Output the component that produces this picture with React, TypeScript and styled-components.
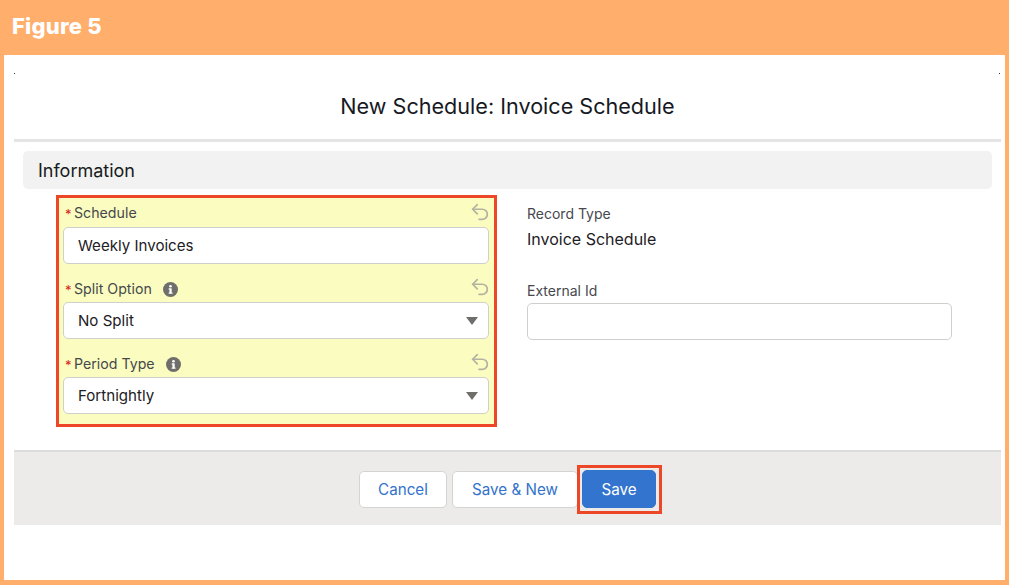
import React from "react";
import styled, { createGlobalStyle } from "styled-components";
import { Undo2 } from "lucide-react";

const Global = createGlobalStyle`
  html, body { margin: 0; padding: 0; background: #fff; }
  * { box-sizing: border-box; }
  body { font-family: Inter, "Liberation Sans", sans-serif; }
`;

const Frame = styled.div`
  width: 1009px;
  height: 585px;
  background: #ffae6b;
  display: flex;
  flex-direction: column;
  padding: 0 4px 5px 4px;
  overflow: hidden;
`;

const Banner = styled.header`
  height: 55px;
  flex: none;
  padding: 14px 0 0 8px;
  color: #fff;
  font: 800 22px/24px Inter, sans-serif;
  letter-spacing: 0.2px;
`;

const Panel = styled.main`
  flex: 1;
  background: #fff;
  padding: 0 4px 0 10px;
  display: flex;
  flex-direction: column;
`;

const Marks = styled.div`
  height: 37px;
  padding: 18px 1px 0 0;
  display: flex;
  justify-content: space-between;
  align-items: flex-start;
`;

const Mark = styled.span`
  width: 1px;
  height: 1px;
  background: #333;
`;

const Title = styled.h1`
  margin: 0;
  height: 47px;
  text-align: center;
  font-weight: 400;
  font-size: 21.6px;
  line-height: 28px;
  color: #16191f;
`;

const Rule = styled.div`
  height: 3px;
  background: #e4e4e4;
  flex: none;
`;

const Section = styled.div`
  margin: 9px 9px 0 9px;
  height: 38px;
  border-radius: 5px;
  background: #f2f2f2;
  padding-left: 15px;
  font-size: 18px;
  line-height: 40px;
  color: #181b20;
`;

const FormGrid = styled.div`
  display: flex;
  margin: 6px 0 0 42px;
  height: 232px;
`;

const Required = styled.section`
  width: 441px;
  height: 232px;
  border: 3px solid #ee4728;
  background: #fbfdc0;
  padding: 6px 5px 0 4px;
  display: flex;
  flex-direction: column;
  gap: 15px;
`;

const LabelRow = styled.div`
  height: 23px;
  flex: none;
  display: flex;
  align-items: flex-start;
  font-size: 14.2px;
  line-height: 18px;
  color: #46484d;
  position: relative;
`;

const Field = styled.div`
  height: 60px;
  flex: none;
  display: flex;
  flex-direction: column;

  & + & ${LabelRow} {
    padding-top: 1px;
  }
`;

const Star = styled.span`
  color: #d6231c;
  width: 9px;
  margin-left: 2px;
  margin-top: 1px;
  font-size: 13px;
`;

const InfoBadge = styled.svg`
  width: 15px;
  height: 15px;
  margin: 2px 0 0 11px;
  flex: none;
`;

const Revert = styled(Undo2)`
  position: absolute;
  right: -2px;
  top: -3px;
  color: #b3b3a3;
`;

const Control = styled.div<{ $width?: number }>`
  width: ${(p) => p.$width ?? 426}px;
  height: 37px;
  flex: none;
  border: 1.5px solid #cfcfcb;
  border-radius: 5px;
  background: #fff;
  display: flex;
  align-items: center;
  justify-content: space-between;
  padding: 0 10px 0 14px;
  font-size: 15.1px;
  color: #1d2025;
`;

const Caret = styled.span`
  width: 0;
  height: 0;
  border-left: 6px solid transparent;
  border-right: 6px solid transparent;
  border-top: 8px solid #706e6b;
`;

const Side = styled.aside`
  margin-left: 30px;
  display: flex;
  flex-direction: column;
  padding-top: 10px;
`;

const SideLabel = styled.div`
  font-size: 14px;
  line-height: 17px;
  color: #46484d;
`;

const SideValue = styled.div`
  margin-top: 8px;
  font-size: 16px;
  line-height: 18px;
  color: #1d2025;
  height: 52px;
`;

const SideInputLabel = styled(SideLabel)`
  margin-bottom: 4px;
`;

const Footer = styled.footer`
  margin-top: 23px;
  height: 75px;
  background: #ecebea;
  border-top: 2px solid #dcdcdc;
  display: flex;
  justify-content: center;
  align-items: flex-start;
  padding-top: 19px;
`;

const Button = styled.button<{ $width: number; $gap: number }>`
  width: ${(p) => p.$width}px;
  height: 37px;
  margin-left: ${(p) => p.$gap}px;
  border-radius: 5px;
  font: 400 15.2px Inter, "Liberation Sans", sans-serif;
  border: 1.5px solid #d4d4d0;
  background: #fff;
  color: #3272cc;
`;

const PrimaryButton = styled(Button)`
  position: relative;
  height: 38px;
  margin-top: -1px;
  border-color: #3274ce;
  background: #3274ce;
  color: #fff;

  &::after {
    content: "";
    position: absolute;
    inset: -6.5px;
    border: 3px solid #ee4728;
  }
`;

const Info = () => (
  <InfoBadge viewBox="0 0 15 15">
    <circle cx="7.5" cy="7.5" r="7.5" fill="#706e6b" />
    <rect x="6.4" y="6.4" width="2.3" height="5" fill="#fff" />
    <rect x="5.6" y="6.4" width="2" height="1.1" fill="#fff" />
    <rect x="5.6" y="10.6" width="4" height="1.1" fill="#fff" />
    <circle cx="7.5" cy="4.3" r="1.3" fill="#fff" />
  </InfoBadge>
);

const RequiredField = ({ label, value, info, select }: { label: string; value: string; info?: boolean; select?: boolean }) => (
  <Field>
    <LabelRow>
      <Star>*</Star>
      {label}
      {info && <Info />}
      <Revert size={22} strokeWidth={1.9} />
    </LabelRow>
    <Control>
      {value}
      {select && <Caret />}
    </Control>
  </Field>
);

export default function App() {
  return (
    <>
      <Global />
      <Frame>
        <Banner>Figure 5</Banner>
        <Panel>
          <Marks>
            <Mark />
            <Mark />
          </Marks>
          <Title>New Schedule: Invoice Schedule</Title>
          <Rule />
          <Section>Information</Section>
          <FormGrid>
            <Required>
              <RequiredField label="Schedule" value="Weekly Invoices" />
              <RequiredField label="Split Option" value="No Split" info select />
              <RequiredField label="Period Type" value="Fortnightly" info select />
            </Required>
            <Side>
              <SideLabel>Record Type</SideLabel>
              <SideValue>Invoice Schedule</SideValue>
              <SideInputLabel>External Id</SideInputLabel>
              <Control $width={425} />
            </Side>
          </FormGrid>
          <Footer>
            <Button $width={88} $gap={0}>Cancel</Button>
            <Button $width={126} $gap={5}>Save &amp; New</Button>
            <PrimaryButton $width={74} $gap={4}>Save</PrimaryButton>
          </Footer>
        </Panel>
      </Frame>
    </>
  );
}
